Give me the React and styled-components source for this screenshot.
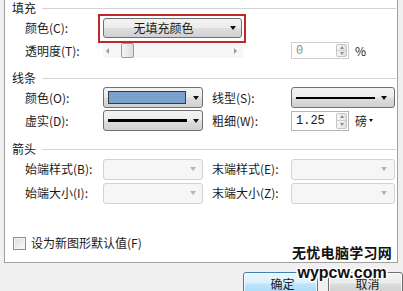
import React from "react";
import styled, { createGlobalStyle } from "styled-components";

const GlobalStyle = createGlobalStyle`
  html, body {
    margin: 0;
    padding: 0;
    background: #f0f0f0;
  }
  body {
    font-family: "Noto Sans CJK SC", "Liberation Sans", sans-serif;
    font-size: 12px;
    color: #1a1a1a;
    overflow: hidden;
  }
`;

const Window = styled.div`
  position: relative;
  width: 403px;
  height: 291px;
  background: #f0f0f0;
  overflow: hidden;
`;

const Panel = styled.div`
  margin-left: 4px;
  width: 392px;
  height: 262px;
  background: #fff;
  border: 1px solid #a0a0a0;
  border-top: none;
  display: flex;
  flex-direction: column;
`;

const GroupTitle = styled.div`
  display: flex;
  align-items: center;
  height: 16px;
  line-height: 16px;
  padding-left: 7px;
  margin-top: ${(p) => p.$top || 0}px;

  &::after {
    content: "";
    flex: 1;
    height: 1px;
    background: #d3d3d3;
    margin: 0 1px 0 6px;
  }
`;

const Row = styled.div`
  display: grid;
  grid-template-columns: 78px 100px 88px 104px;
  align-items: center;
  height: ${(p) => p.$h || 23}px;
  padding-left: 20px;
`;

const Label = styled.span`
  white-space: nowrap;
  line-height: 14px;
  padding-left: ${(p) => (p.$second ? 9 : 0)}px;
`;

const Arrow = styled.span`
  width: 0;
  height: 0;
  border-left: 3.5px solid transparent;
  border-right: 3.5px solid transparent;
  border-top: 4px solid ${(p) => (p.$muted ? "#b4b4b4" : "#111")};
`;

const FillButton = styled.div`
  grid-column: 2 / 4;
  position: relative;
  width: 139px;
  height: 20px;
  box-sizing: border-box;
  border: 1px solid #707070;
  border-radius: 3px;
  background: linear-gradient(#f3f3f3 0%, #ececec 48%, #dedede 52%, #d0d0d0 100%);
  display: flex;
  align-items: center;
  justify-content: center;
  padding-right: 18px;

  &::before {
    content: "";
    position: absolute;
    left: -6px;
    top: -5px;
    right: -5px;
    bottom: -6px;
    border: 2px solid #c0262e;
  }

  ${Arrow} {
    position: absolute;
    right: 5px;
    top: 7px;
  }
`;

const Slider = styled.div`
  grid-column: 2 / 4;
  width: 140px;
  height: 15px;
  background: #f6f6f6;
  display: flex;
  align-items: center;
  padding: 0 6px 0 3px;
  box-sizing: border-box;
`;

const SideArrow = styled.span`
  width: 0;
  height: 0;
  border-top: 3.5px solid transparent;
  border-bottom: 3.5px solid transparent;
  ${(p) =>
    p.$right
      ? "border-left: 3.5px solid #9a9a9a; margin-left: auto;"
      : "border-right: 3.5px solid #9a9a9a;"}
`;

const Thumb = styled.span`
  width: 13px;
  height: 15px;
  margin-left: 12px;
  box-sizing: border-box;
  border: 1px solid #9a9a9a;
  border-radius: 2px;
  background: linear-gradient(90deg, #f4f4f4, #dcdcdc);
`;

const Field = styled.div`
  display: flex;
  align-items: center;
  gap: 6px;
`;

const SpinBox = styled.div`
  display: flex;
  align-items: center;
  width: 58px;
  height: ${(p) => p.$h || 20}px;
  box-sizing: border-box;
  border: 1px solid ${(p) => (p.$disabled ? "#cfcfcf" : "#b5b5b5")};
  background: #fff;
  padding-left: 4px;
  font-family: "Liberation Mono", monospace;
  color: ${(p) => (p.$disabled ? "#8a8a8a" : "#1a1a1a")};
`;

const SpinButtons = styled.div`
  margin: 1px 1px 1px auto;
  width: 11px;
  align-self: stretch;
  display: flex;
  flex-direction: column;
  border: 1px solid #c4c4c4;
  border-radius: 2px;
  box-sizing: border-box;
  background: linear-gradient(90deg, #f7f7f7, #e3e3e3);
`;

const SpinHalf = styled.span`
  flex: 1;
  display: flex;
  align-items: center;
  justify-content: center;

  &::after {
    content: "";
    border-left: 2.5px solid transparent;
    border-right: 2.5px solid transparent;
    ${(p) =>
      p.$down
        ? "border-top: 3px solid #8c8c8c;"
        : "border-bottom: 3px solid #8c8c8c;"}
  }

  & + & {
    border-top: 1px solid #d0d0d0;
  }
`;

const Unit = styled.span`
  display: flex;
  align-items: center;
  gap: 2px;
  line-height: 14px;

  ${Arrow} {
    border-left-width: 2.5px;
    border-right-width: 2.5px;
    border-top-width: 3px;
  }
`;

const Combo = styled.div`
  width: ${(p) => p.$w || 100}px;
  height: 21px;
  box-sizing: border-box;
  border: 1px solid ${(p) => (p.$disabled ? "#d2d2d2" : "#707070")};
  border-radius: 3px;
  background: ${(p) =>
    p.$disabled
      ? "#f6f6f6"
      : "linear-gradient(#f3f3f3 0%, #ececec 48%, #dedede 52%, #d0d0d0 100%)"};
  display: flex;
  align-items: center;
  padding: 0 ${(p) => p.$pr || 4}px 0 4px;
  gap: 6px;

  ${Arrow} {
    margin-left: auto;
  }
`;

const Swatch = styled.span`
  width: 78px;
  height: 13px;
  box-sizing: border-box;
  border: 1px solid #3a3a3a;
  background: #7aa2cc;
`;

const Stroke = styled.span`
  width: ${(p) => p.$w}px;
  height: ${(p) => p.$t}px;
  background: #000;
`;

const CheckRow = styled.label`
  display: flex;
  align-items: center;
  gap: 5px;
  height: 16px;
  margin-top: 30px;
  padding-left: 8px;
  line-height: 14px;
`;

const CheckBox = styled.span`
  width: 13px;
  height: 13px;
  box-sizing: border-box;
  border: 1px solid #8f8f8f;
  background: linear-gradient(135deg, #dcdcdc, #fafafa);
  box-shadow: inset 0 0 0 1px #f4f4f4;
`;

const ButtonBar = styled.div`
  display: flex;
  gap: 10px;
  padding: 9px 0 0 243px;
`;

const DialogButton = styled.button`
  flex: none;
  width: 75px;
  height: 23px;
  border-radius: 3px;
  font: inherit;
  color: #1a1a1a;
  border: 1px solid ${(p) => (p.$primary ? "#3c7fb1" : "#707070")};
  background: ${(p) =>
    p.$primary
      ? "linear-gradient(#eaf6fd 0%, #d9f0fc 48%, #bee6fd 52%, #a7d9f5 100%)"
      : "linear-gradient(#f2f2f2 0%, #ebebeb 48%, #dddddd 52%, #cfcfcf 100%)"};
  box-shadow: inset 0 0 0 1px rgba(255, 255, 255, 0.7);
  padding: 0 0 0 4px;
  line-height: 20px;
`;

const Watermark = styled.div`
  position: absolute;
  left: 292px;
  top: 242px;
  display: flex;
  flex-direction: column;
  align-items: center;
  font-weight: bold;
  color: #111;
  text-shadow: 1px 0 #fff, -1px 0 #fff, 0 1px #fff, 0 -1px #fff, 1px 1px #fff,
    -1px -1px #fff, 1px -1px #fff, -1px 1px #fff, 2px 0 #fff, -2px 0 #fff;
`;

const MarkTitle = styled.span`
  font-size: 14px;
  line-height: 20px;
  letter-spacing: 0.3px;
`;

const MarkUrl = styled.span`
  font-family: "Liberation Sans", sans-serif;
  font-size: 16px;
  line-height: 20px;
  margin-top: 1px;
`;

export default function App() {
  return (
    <Window>
      <GlobalStyle />
      <Panel>
        <GroupTitle>填充</GroupTitle>
        <Row>
          <Label>颜色(C):</Label>
          <FillButton>
            无填充颜色
            <Arrow />
          </FillButton>
        </Row>
        <Row>
          <Label>透明度(T):</Label>
          <Slider>
            <SideArrow />
            <Thumb />
            <SideArrow $right />
          </Slider>
          <Field>
            <SpinBox $h={17} $disabled>
              0
              <SpinButtons>
                <SpinHalf />
                <SpinHalf $down />
              </SpinButtons>
            </SpinBox>
            <Unit>%</Unit>
          </Field>
        </Row>

        <GroupTitle $top={8}>线条</GroupTitle>
        <Row>
          <Label>颜色(O):</Label>
          <Combo $pr={3}>
            <Swatch />
            <Arrow />
          </Combo>
          <Label $second>线型(S):</Label>
          <Combo $w={104} $pr={7}>
            <Stroke $w={80} $t={2} />
            <Arrow />
          </Combo>
        </Row>
        <Row>
          <Label>虚实(D):</Label>
          <Combo $pr={3}>
            <Stroke $w={80} $t={3} />
            <Arrow />
          </Combo>
          <Label $second>粗细(W):</Label>
          <Field>
            <SpinBox $h={20}>
              1.25
              <SpinButtons>
                <SpinHalf />
                <SpinHalf $down />
              </SpinButtons>
            </SpinBox>
            <Unit>
              磅<Arrow />
            </Unit>
          </Field>
        </Row>

        <GroupTitle $top={9}>箭头</GroupTitle>
        <Row $h={24}>
          <Label>始端样式(B):</Label>
          <Combo $disabled $pr={6}>
            <Arrow $muted />
          </Combo>
          <Label $second>末端样式(E):</Label>
          <Combo $w={104} $disabled $pr={7}>
            <Arrow $muted />
          </Combo>
        </Row>
        <Row $h={24}>
          <Label>始端大小(I):</Label>
          <Combo $disabled $pr={6}>
            <Arrow $muted />
          </Combo>
          <Label $second>末端大小(Z):</Label>
          <Combo $w={104} $disabled $pr={7}>
            <Arrow $muted />
          </Combo>
        </Row>

        <CheckRow>
          <CheckBox />
          设为新图形默认值(F)
        </CheckRow>
      </Panel>

      <ButtonBar>
        <DialogButton $primary>确定</DialogButton>
        <DialogButton>取消</DialogButton>
      </ButtonBar>

      <Watermark>
        <MarkTitle>无忧电脑学习网</MarkTitle>
        <MarkUrl>wypcw.com</MarkUrl>
      </Watermark>
    </Window>
  );
}
